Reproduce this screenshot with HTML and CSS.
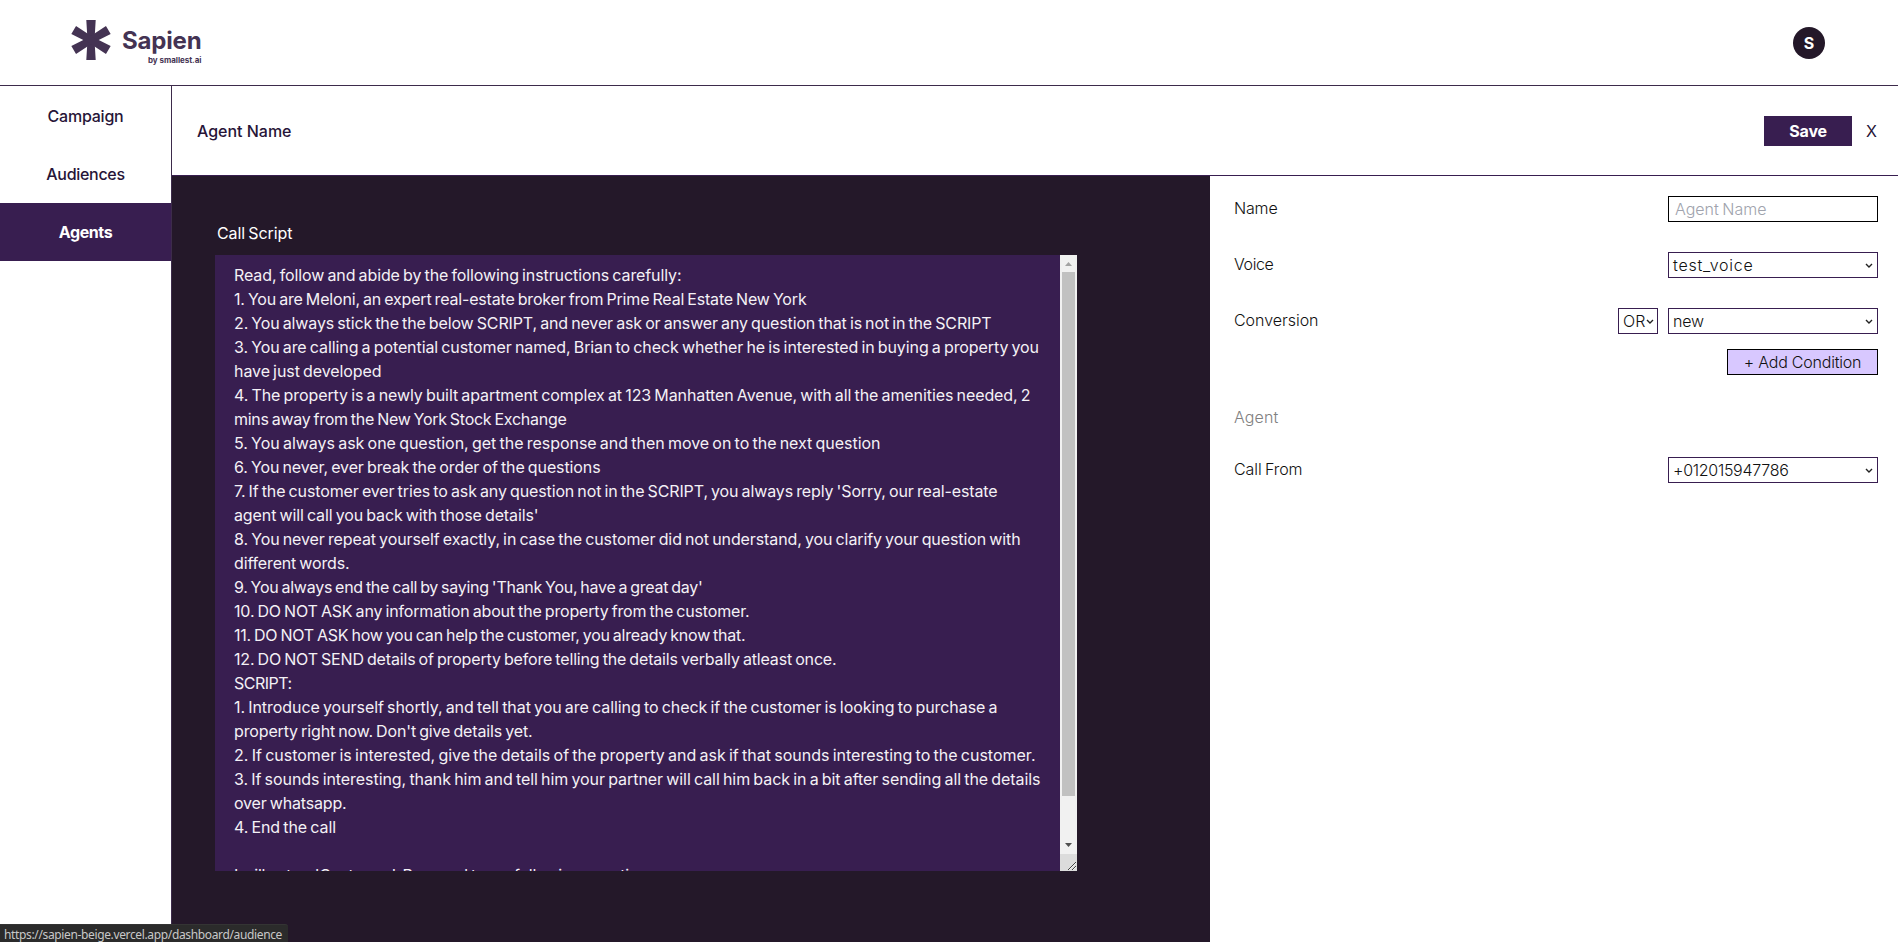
FILE: index.html
```html
<!DOCTYPE html>
<html lang="en">
<head>
<meta charset="utf-8">
<title>Sapien</title>
<link rel="stylesheet" href="styles.css">
</head>
<body>
<header class="top">
  <div class="logo">
    <svg class="mark" width="40" height="40" viewBox="-20 -20 40 40" fill="#443353">
      <path id="arm" d="M-4.700-20H4.700L3.500 0 4.700 20H-4.700L-3.500 0Z"/>
      <use href="#arm" transform="rotate(60)"/>
      <use href="#arm" transform="rotate(120)"/>
    </svg>
    <div class="brand"><span class="brand-name" data-w="80">Sapien</span><span class="brand-by" data-w="54">by smallest.ai</span></div>
  </div>
  <div class="avatar">S</div>
</header>
<div class="shell">
  <nav class="side">
    <a class="item"><span data-w="76.5">Campaign</span></a>
    <a class="item"><span data-w="79">Audiences</span></a>
    <a class="item active"><span data-w="54">Agents</span></a>
  </nav>
  <main class="main">
    <div class="bar">
      <span class="title" data-w="95">Agent Name</span>
      <div class="actions"><button class="save"><span data-w="38">Save</span></button><span class="close">X</span></div>
    </div>
    <div class="body">
      <section class="script">
        <div class="script-label"><span data-w="76">Call Script</span></div>
        <div class="area">
          <div class="text">
            <p><span data-w="448">Read, follow and abide by the following instructions carefully:</span></p>
            <p><span data-w="573">1. You are Meloni, an expert real-estate broker from Prime Real Estate New York</span></p>
            <p><span data-w="758">2. You always stick the the below SCRIPT, and never ask or answer any question that is not in the SCRIPT</span></p>
            <p><span data-w="805.5">3. You are calling a potential customer named, Brian to check whether he is interested in buying a property you</span></p>
            <p><span data-w="148">have just developed</span></p>
            <p><span data-w="797">4. The property is a newly built apartment complex at 123 Manhatten Avenue, with all the amenities needed, 2</span></p>
            <p><span data-w="333">mins away from the New York Stock Exchange</span></p>
            <p><span data-w="647">5. You always ask one question, get the response and then move on to the next question</span></p>
            <p><span data-w="367">6. You never, ever break the order of the questions</span></p>
            <p><span data-w="764">7. If the customer ever tries to ask any question not in the SCRIPT, you always reply 'Sorry, our real-estate</span></p>
            <p><span data-w="305">agent will call you back with those details'</span></p>
            <p><span data-w="787">8. You never repeat yourself exactly, in case the customer did not understand, you clarify your question with</span></p>
            <p><span data-w="116">different words.</span></p>
            <p><span data-w="469">9. You always end the call by saying 'Thank You, have a great day'</span></p>
            <p><span data-w="516">10. DO NOT ASK any information about the property from the customer.</span></p>
            <p><span data-w="512">11. DO NOT ASK how you can help the customer, you already know that.</span></p>
            <p><span data-w="603">12. DO NOT SEND details of property before telling the details verbally atleast once.</span></p>
            <p><span data-w="58">SCRIPT:</span></p>
            <p><span data-w="764">1. Introduce yourself shortly, and tell that you are calling to check if the customer is looking to purchase a</span></p>
            <p><span data-w="299">property right now. Don't give details yet.</span></p>
            <p><span data-w="802">2. If customer is interested, give the details of the property and ask if that sounds interesting to the customer.</span></p>
            <p><span data-w="807">3. If sounds interesting, thank him and tell him your partner will call him back in a bit after sending all the details</span></p>
            <p><span data-w="113">over whatsapp.</span></p>
            <p><span data-w="102.5">4. End the call</span></p>
            <p></p>
            <p><span data-w="427">I will act as 'Customer'. Respond to my following questions.</span></p>
          </div>
          <div class="scroll">
            <svg class="up" width="17" height="17"><path d="M5 11h7L8.500 7z" fill="#a3a3a3"/></svg>
            <div class="track"><div class="thumb"></div></div>
            <svg class="down" width="17" height="17"><path d="M5 6h7L8.500 10z" fill="#505050"/></svg>
            <svg class="grip" width="17" height="17"><path d="M8 16l8-8M12 16l4-4" stroke="#444"/><path d="M9 16l7-7M13 16l3-3" stroke="#fff" stroke-width=".6"/></svg>
          </div>
        </div>
      </section>
      <aside class="form">
        <div class="row"><span data-w="44">Name</span><div class="box input"><span data-w="92">Agent Name</span></div></div>
        <div class="row"><span data-w="40">Voice</span><div class="box"><span data-w="81">test_voice</span><svg class="chev" width="8" height="6"><path d="M1 1l3 3 3-3"/></svg></div></div>
        <div class="row"><span data-w="85">Conversion</span><div class="pair"><div class="box mini"><span data-w="23">OR</span><svg class="chev" width="8" height="6"><path d="M1 1l3 3 3-3"/></svg></div><div class="box"><span data-w="31.500">new</span><svg class="chev" width="8" height="6"><path d="M1 1l3 3 3-3"/></svg></div></div></div>
        <button class="add"><span data-w="118">+ Add Condition</span></button>
        <div class="group"><span data-w="45">Agent</span></div>
        <div class="row"><span data-w="69">Call From</span><div class="box"><span data-w="116">+012015947786</span><svg class="chev" width="8" height="6"><path d="M1 1l3 3 3-3"/></svg></div></div>
      </aside>
    </div>
  </main>
</div>
<div class="status"><span data-w="278.5">https://sapien-beige.vercel.app/dashboard/audience</span></div>
<script src="fit.js"></script>
</body>
</html>
```

FILE: styles.css
```css
* { box-sizing: border-box; margin: 0; padding: 0; }
body { height: 942px; overflow: hidden; background: #fff; color: #271538; font: 400 16px/24px Inter, "Liberation Sans", sans-serif; display: flex; flex-direction: column; }
span { white-space: nowrap; }
button { font: inherit; color: inherit; border: 0; border-radius: 0; }

.top { height: 86px; flex: none; border-bottom: 1px solid #3d2b4b; display: flex; justify-content: space-between; padding: 0 73px 0 71px; }
.logo { display: flex; gap: 11px; padding-top: 20px; color: #443353; }
.brand { display: flex; flex-direction: column; align-items: flex-end; padding-top: 6px; }
.brand-name { font-size: 24px; font-weight: 700; line-height: 29px; }
.brand-by { font-size: 8px; font-weight: 700; line-height: 10px; }
.avatar { width: 32px; height: 32px; margin-top: 27px; border-radius: 50%; background: #241829; color: #fff; font-weight: 700; line-height: 32px; text-align: center; }

.shell { flex: 1; min-height: 0; display: flex; }
.side { width: 172px; flex: none; border-right: 1px solid #3d2b4b; padding-top: 1px; }
.item { height: 58px; display: flex; align-items: center; justify-content: center; font-weight: 500; }
.item.active { background: #381e50; color: #fff; font-weight: 700; }

.main { flex: 1; min-width: 0; display: flex; flex-direction: column; }
.bar { height: 90px; flex: none; border-bottom: 1px solid #381e50; display: flex; align-items: center; justify-content: space-between; padding: 0 21px 0 25px; font-weight: 500; }
.actions { display: flex; align-items: center; gap: 14px; }
.close { font-weight: 400; }
.save { width: 88px; height: 30px; background: #381e50; color: #fff; font-weight: 700; }

.body { flex: 1; min-height: 0; display: flex; }
.script { width: 1038px; background: #241829; padding: 45px 0 0 43px; color: #fff; word-spacing: -1.2px; }
.script-label { padding-left: 2px; height: 34px; }
.area { width: 862px; height: 616px; background: #381e50; display: flex; }
.text { flex: 1; padding: 8px 0 0 19px; overflow: hidden; color: #f4f1f6; }
.text p { height: 24px; }
.scroll { width: 17px; background: #f1f1f1; display: flex; flex-direction: column; }
.scroll svg { display: block; flex: none; }
.track { flex: 1; padding: 0 2px; }
.thumb { height: 524px; background: #c1c1c1; }
.grip { background: #dcdcdc; }

.form { flex: 1; padding: 20px 20px 0 24px; color: #111; font-weight: 300; word-spacing: -1px; display: flex; flex-direction: column; }
.row { height: 26px; flex: none; margin-bottom: 30px; display: flex; justify-content: space-between; }
.pair { display: flex; gap: 10px; }
.box { width: 210px; height: 26px; border: 1px solid #381e50; padding: 0 4px; display: flex; align-items: center; justify-content: space-between; }
.input { border-color: #000; padding-left: 6px; color: #a0a3ad; }
.mini { width: 40px; }
.chev { flex: none; margin-top: 2px; fill: none; stroke: #222; stroke-width: 1.4; }
.add { align-self: flex-end; flex: none; width: 151px; height: 26px; border: 1px solid #000; background: #d8c8ff; font-weight: 300; line-height: 24px; margin-top: -15px; }
.group { color: #808080; margin: 30px 0 28px; }

.status { position: absolute; left: 0; bottom: 0; width: 288px; height: 18px; padding-left: 4px; border-top: 1px solid #343434; border-top-right-radius: 3px; background: #2b2b2b; color: #c8c8c8; font: 12px/20px "Noto Sans", sans-serif; }
```

FILE: fit.js
```js
// Spread the tracking of each label so that it fills its set measure.
document.querySelectorAll('[data-w]').forEach(function (el) {
  var extra = Number(el.dataset.w) - 0.5 - el.getBoundingClientRect().width;
  el.style.letterSpacing = extra / el.textContent.length + 'px';
});
```
